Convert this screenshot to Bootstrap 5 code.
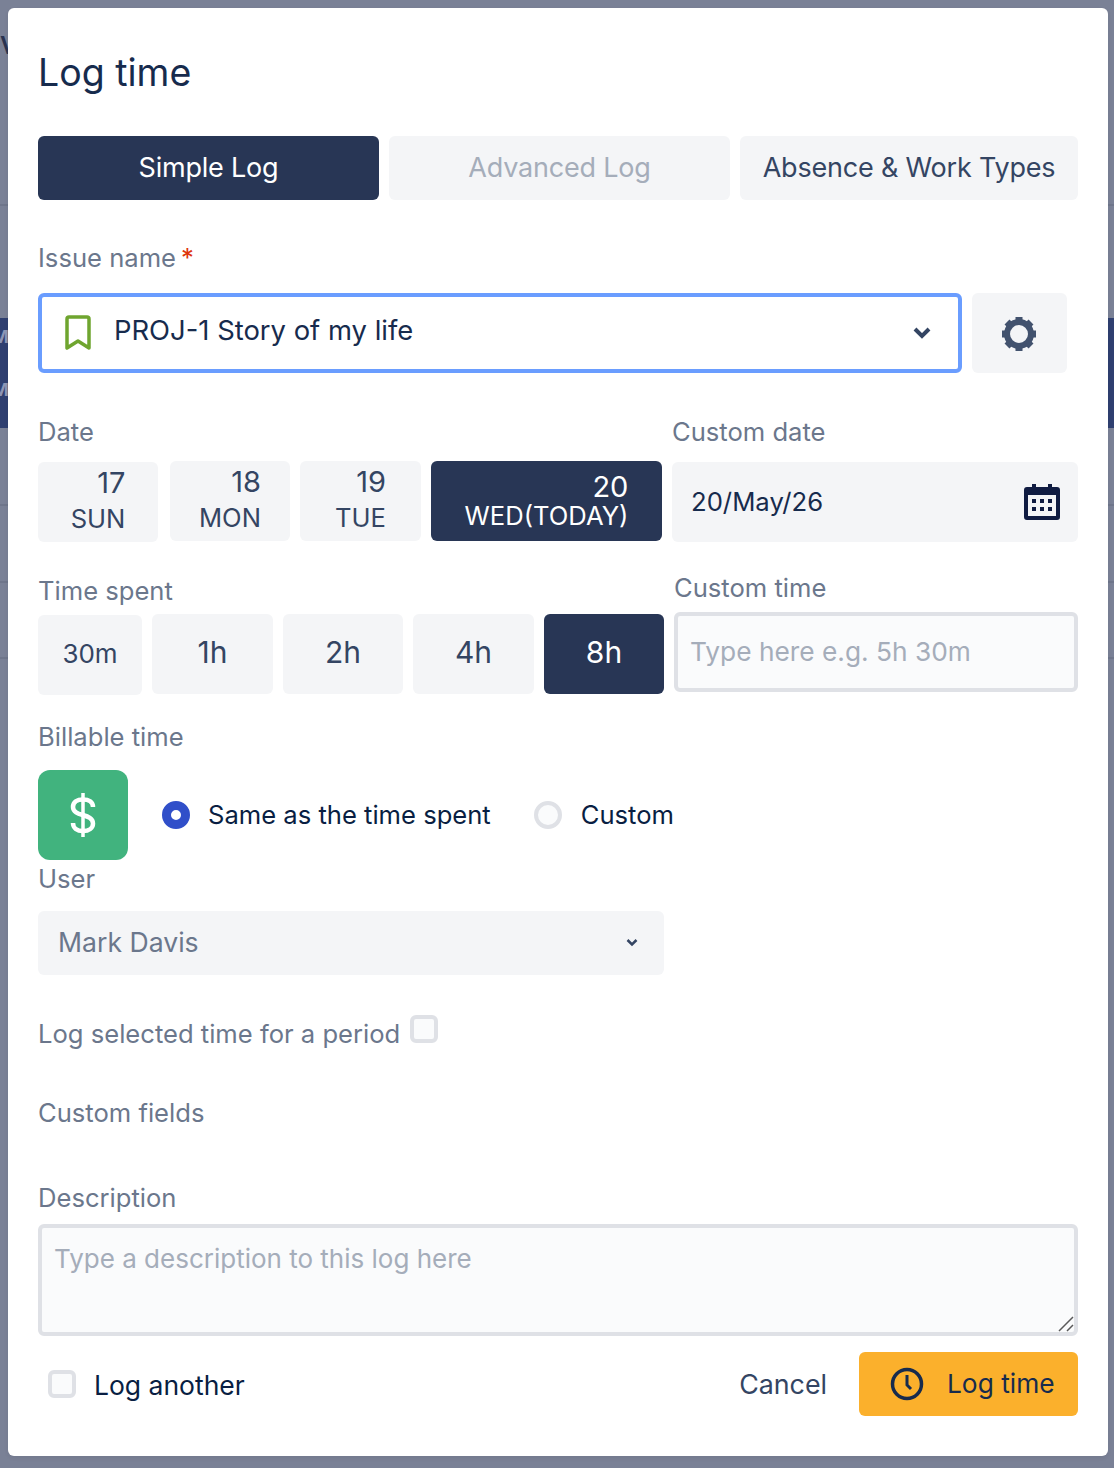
<!DOCTYPE html>
<html lang="en">
<head>
  <meta charset="UTF-8" />
  <title>Log time</title>
  <link rel="stylesheet" href="https://cdn.jsdelivr.net/npm/bootstrap@5.3.0/dist/css/bootstrap.min.css" />
  <style>
    body {
      background: #7a8196;
      font-family: Inter, "Liberation Sans", sans-serif;
      color: #172b4d;
      margin: 0;
      height: 1468px;
      overflow: hidden;
    }
    .backdrop-bar { position: absolute; left: 0; right: 0; top: 318px; height: 110px; background: #2f3f70; }
    .backdrop-line { position: absolute; left: 0; right: 0; height: 2px; background: #6f768b; }
    .backdrop-text { position: absolute; left: -8px; font-size: 18px; line-height: 24px; font-weight: 700; color: #8d96b5; }
    .backdrop-head { position: absolute; left: 0; top: 31px; font-size: 24px; line-height: 30px; font-weight: 600; color: #2a3350; }
    .log-modal {
      position: relative;
      margin: 8px 6px 0 8px;
      height: 1448px;
      padding: 0 30px;
      background: #fff;
      border-radius: 6px;
    }
    .log-title { font-size: 37.500px; font-weight: 400; line-height: 46px; color: #172b4d; padding-top: 42px; margin: 0 0 40px; }
    .field-label { display: block; font-size: 25.600px; line-height: 32px; color: #6b778c; margin: 0; }
    .gap-ten { gap: 10px; }
    .tab-btn, .day-btn, .time-btn, .gear-btn {
      background: #f4f5f7;
      border: 0;
      border-radius: 6px;
      color: #344563;
      font-size: 27px;
      padding: 0;
    }
    .tab-btn { height: 64px; line-height: 34px; letter-spacing: -0.2px; }
    .tab-btn:disabled { background: #f4f5f7; color: #a5adba; opacity: 1; }
    .is-active, .is-active:hover { background: #283655; color: #fff; }
    .issue-select {
      width: 924px;
      height: 80px;
      border: 4px solid #6a9dff;
      border-radius: 6px;
      padding: 0 26px 0 23px;
      font-size: 27.400px;
      color: #172b4d;
    }
    .issue-name { margin-left: 23px; position: relative; top: -2px; }
    .gear-btn { width: 95px; height: 80px; padding: 2px 2px 0 0; }
    .day-btn { height: 80px; line-height: 35px; font-size: 25.600px; padding-bottom: 3px; }
    .day-inner { display: inline-block; text-align: right; }
    .day-num { font-size: 29px; }
    .day-btn.is-active { line-height: 28px; padding-bottom: 0; }
    .day-first { height: 80px; margin-top: 1px; margin-right: 2px; }
    .date-box {
      width: 406px;
      height: 80px;
      background: #f4f5f7;
      border-radius: 6px;
      padding: 0 18px 0 19px;
      font-size: 25.700px;
      color: #172b4d;
    }
    .time-btn { height: 80px; font-size: 30px; padding-bottom: 3px; }
    .time-first { font-size: 26px; margin-top: 1px; }
    .time-input.form-control, .desc-input.form-control {
      background: #fafbfc;
      border: 4px solid #dfe1e6;
      border-radius: 6px;
      color: #172b4d;
      box-shadow: none;
    }
    .time-input.form-control { height: 80px; padding: 0 12px 2px; font-size: 26.300px; }
    .desc-input.form-control { height: 112px; padding: 14px 12px; line-height: 34px; font-size: 26px; resize: none; }
    .time-input::placeholder, .desc-input::placeholder { color: #a5adba; opacity: 1; }
    .money-tile { width: 90px; height: 90px; background: #41b37e; border-radius: 12px; }
    .radio-dot { width: 28px; height: 28px; border-radius: 50%; flex: none; }
    .radio-on { background: #fff; border: 9px solid #304fc9; }
    .radio-off { background: #fafbfc; border: 4px solid #dfe1e6; }
    .option-text { font-size: 25.600px; line-height: 34px; color: #091e42; }
    .user-select { width: 626px; height: 64px; background: #f4f5f7; border-radius: 6px; padding: 0 26px 0 20px; font-size: 26.600px; color: #6b778c; }
    .tick-box { width: 28px; height: 28px; background: #fafbfc; border: 4px solid #dfe1e6; border-radius: 6px; flex: none; }
    .another-text { font-size: 26.500px; line-height: 34px; color: #091e42; margin-left: 18px; position: relative; top: 1px; }
    .cancel-link { font-size: 26.800px; color: #344563; text-decoration: none; }
    .submit-btn, .submit-btn:hover { width: 219px; height: 64px; background: #fbb02c; border: 0; border-radius: 6px; color: #172b4d; font-size: 26.300px; padding: 0 0 0 31px; }
    .resize-grip { position: absolute; right: 4px; bottom: 4px; pointer-events: none; }
  </style>
</head>
<body>
  <div class="backdrop-bar"></div>
  <div class="backdrop-line" style="top: 204px"></div>
  <div class="backdrop-line" style="top: 504px"></div>
  <div class="backdrop-line" style="top: 581px"></div>
  <div class="backdrop-line" style="top: 657px"></div>
  <div class="backdrop-head">V</div>
  <div class="backdrop-text" style="top: 325px">M</div>
  <div class="backdrop-text" style="top: 378px">M</div>

  <div class="log-modal shadow-sm">
    <h1 class="log-title">Log time</h1>

    <div class="d-flex gap-ten">
      <button class="tab-btn is-active" style="width: 341px">Simple Log</button>
      <button class="tab-btn" style="width: 341px" disabled>Advanced Log</button>
      <button class="tab-btn" style="width: 338px">Absence &amp; Work Types</button>
    </div>

    <label class="field-label" style="margin-top: 42px">Issue name<span style="color: #de350b; margin-left: 5px">*</span></label>
    <div class="d-flex gap-ten" style="margin-top: 19px">
      <div class="issue-select d-flex align-items-center">
        <svg width="26" height="36" viewBox="0 0 26 36" fill="none"><path d="M2 4a2 2 0 0 1 2-2h18a2 2 0 0 1 2 2v29l-11-7-11 7z" stroke="#6fa52f" stroke-width="3.500" stroke-linejoin="round"/></svg>
        <span class="issue-name">PROJ-1 Story of my life</span>
        <svg class="ms-auto" width="20" height="14" viewBox="0 0 20 14" fill="none"><path d="M3 3l7 7 7-7" stroke="#344563" stroke-width="4"/></svg>
      </div>
      <button class="gear-btn d-flex align-items-center justify-content-center" aria-label="Settings">
        <svg width="36" height="36" viewBox="0 0 36 36" fill="none">
          <circle cx="18" cy="18" r="12" stroke="#42526e" stroke-width="6"/>
          <g stroke="#42526e" stroke-width="7" stroke-linecap="butt">
            <path d="M18 1v5M18 30v5M1 18h5M30 18h5M6 6l3.500 3.500M26.500 26.500L30 30M6 30l3.500-3.500M26.500 9.500L30 6"/>
          </g>
        </svg>
      </button>
    </div>

    <div class="d-flex gap-ten" style="margin-top: 43px">
      <div style="width: 624px">
        <label class="field-label">Date</label>
        <div class="d-flex gap-ten" style="margin-top: 13px">
          <button class="day-btn day-first" style="width: 120px"><span class="day-inner"><span class="day-num">17</span><br>SUN</span></button>
          <button class="day-btn" style="width: 120px"><span class="day-inner"><span class="day-num">18</span><br>MON</span></button>
          <button class="day-btn" style="width: 121px"><span class="day-inner"><span class="day-num">19</span><br>TUE</span></button>
          <button class="day-btn is-active" style="width: 231px"><span class="day-inner"><span class="day-num">20</span><br>WED(TODAY)</span></button>
        </div>
      </div>
      <div>
        <label class="field-label">Custom date</label>
        <div class="date-box d-flex align-items-center justify-content-between" style="margin-top: 14px">
          <span>20/May/26</span>
          <svg width="36" height="36" viewBox="0 0 36 36"><path fill="#101c42" fill-rule="evenodd" d="M8 0h4v3h12V0h4v3h5a3 3 0 0 1 3 3v27a3 3 0 0 1-3 3H3a3 3 0 0 1-3-3V6a3 3 0 0 1 3-3h5zM4 11v21h28V11zM8 15h4v4H8zm8 0h4v4h-4zm8 0h4v4h-4zM8 23h4v4H8zm8 0h4v4h-4zm8 0h4v4h-4z"/></svg>
        </div>
      </div>
    </div>

    <div class="d-flex gap-ten" style="margin-top: 30px">
      <div style="width: 626px">
        <label class="field-label" style="margin-top: 3px">Time spent</label>
        <div class="d-flex gap-ten" style="margin-top: 7px">
          <button class="time-btn time-first" style="width: 104px">30m</button>
          <button class="time-btn" style="width: 121px">1h</button>
          <button class="time-btn" style="width: 120px">2h</button>
          <button class="time-btn" style="width: 121px">4h</button>
          <button class="time-btn is-active" style="width: 120px">8h</button>
        </div>
      </div>
      <div style="width: 404px">
        <label class="field-label">Custom time</label>
        <input class="form-control time-input" style="margin-top: 8px" placeholder="Type here e.g. 5h 30m" />
      </div>
    </div>

    <label class="field-label" style="margin-top: 26px">Billable time</label>
    <div class="d-flex align-items-center" style="margin-top: 17px">
      <div class="money-tile d-flex align-items-center justify-content-center">
        <svg width="26" height="44" viewBox="0 0 26 44" fill="none" stroke="#fff" stroke-width="4.500"><path d="M23 14c0-5-4-7.500-10-7.500S3 9 3 14c0 10 20 6 20 16.500 0 4.500-4 7.500-10 7.500S3 35 3 30"/><path d="M13 0v44" stroke-width="3.500"/></svg>
      </div>
      <span class="radio-dot radio-on" style="margin-left: 34px"></span>
      <span class="option-text" style="margin-left: 18px">Same as the time spent</span>
      <span class="radio-dot radio-off" style="margin-left: 43px"></span>
      <span class="option-text" style="margin-left: 19px">Custom</span>
    </div>

    <label class="field-label" style="margin-top: 3px">User</label>
    <div class="user-select d-flex align-items-center justify-content-between" style="margin-top: 16px">
      <span>Mark Davis</span>
      <svg width="12" height="10" viewBox="0 0 12 10" fill="none"><path d="M1.500 2l4.500 4.500L10.500 2" stroke="#344563" stroke-width="2.500"/></svg>
    </div>

    <div class="d-flex align-items-start" style="margin-top: 40px">
      <label class="field-label" style="margin-top: 3px">Log selected time for a period</label>
      <span class="tick-box" style="margin-left: 10px"></span>
    </div>

    <label class="field-label" style="margin-top: 47px">Custom fields</label>
    <label class="field-label" style="margin-top: 53px">Description</label>
    <div class="position-relative" style="margin-top: 10px">
      <textarea class="form-control desc-input" placeholder="Type a description to this log here"></textarea>
      <svg class="resize-grip" width="16" height="16" viewBox="0 0 16 16" fill="none"><path d="M1 15L15 1M9 15l6-6" stroke="#5a5a5a" stroke-width="1.500"/></svg>
    </div>

    <div class="d-flex align-items-center" style="margin-top: 16px">
      <span class="tick-box" style="margin-left: 10px"></span>
      <span class="another-text">Log another</span>
      <a class="cancel-link ms-auto" href="#">Cancel</a>
      <button class="submit-btn d-flex align-items-center" style="margin-left: 32px">
        <svg width="34" height="34" viewBox="0 0 34 34" fill="none"><circle cx="17" cy="17" r="14.500" stroke="#172b4d" stroke-width="3.500"/><path d="M17 8v10l4 4" stroke="#172b4d" stroke-width="3"/></svg>
        <span style="margin-left: 23px">Log time</span>
      </button>
    </div>
  </div>

  <script src="https://cdn.jsdelivr.net/npm/bootstrap@5.3.0/dist/js/bootstrap.bundle.min.js"></script>
</body>
</html>
